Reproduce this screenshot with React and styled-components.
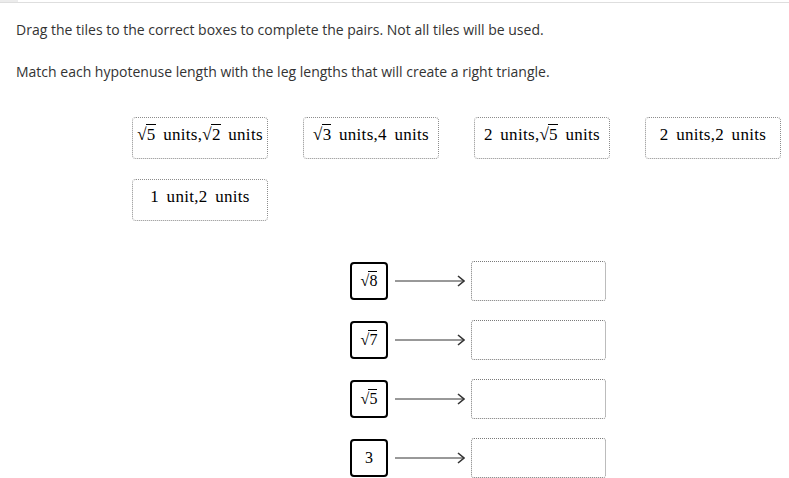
import React from 'react';
import styled, { createGlobalStyle } from 'styled-components';

const GlobalStyle = createGlobalStyle`
  html, body {
    margin: 0;
    padding: 0;
    background: #ffffff;
    overflow: hidden;
  }
`;

const Page = styled.div`
  font-family: "Open Sans", "Liberation Sans", sans-serif;
  color: #333333;
`;

const TopBar = styled.div`
  height: 2px;
  border-bottom: 1px solid #dedede;
  position: relative;

  &::before {
    content: '';
    position: absolute;
    left: 0;
    top: 0;
    width: 18px;
    height: 2px;
    background: #ececec;
  }
`;

const Content = styled.div`
  padding: 17px 16px 0 16px;
`;

const Instruction = styled.p`
  margin: 0 0 22px 0;
  font-size: 14px;
  line-height: 20px;
`;

const TileGrid = styled.div`
  display: grid;
  grid-template-columns: repeat(4, 136px);
  column-gap: 35px;
  row-gap: 20px;
  margin: 35px 0 0 116px;
`;

const Tile = styled.div`
  box-sizing: border-box;
  height: 42px;
  border: 1px dotted #8c8c8c;
  border-radius: 4px;
  display: flex;
  align-items: center;
  justify-content: center;
  padding-bottom: 6px;
  font-family: "Liberation Serif", "DejaVu Serif", serif;
  font-size: 17px;
  letter-spacing: 0.3px;
  word-spacing: 3px;
  color: #000000;
  white-space: pre;
`;

const Radicand = styled.span`
  border-top: 1px solid #000000;
  line-height: 16px;
  padding-left: 1px;
  margin-left: -1px;
`;

const Pairs = styled.div`
  display: flex;
  flex-direction: column;
  gap: 19px;
  margin: 40px 0 0 334px;
`;

const PairRow = styled.div`
  display: flex;
  align-items: center;
`;

const Term = styled.div`
  box-sizing: border-box;
  width: 38px;
  height: 38px;
  border: 2px solid #000000;
  border-radius: 4px;
  display: flex;
  align-items: center;
  justify-content: center;
  font-family: "Liberation Serif", "DejaVu Serif", serif;
  font-size: 16px;
  color: #000000;
`;

const ArrowWrap = styled.div`
  width: 70px;
  height: 14px;
  margin: 0 6px 0 7px;
  display: flex;
`;

const Target = styled.div`
  box-sizing: border-box;
  width: 135px;
  height: 40px;
  border: 1px dotted #7a7a7a;
  border-radius: 3px;
`;

const Sqrt = ({ n }) => (
  <span>
    √<Radicand>{n}</Radicand>
  </span>
);

const Arrow = () => (
  <ArrowWrap>
    <svg width="70" height="14" viewBox="0 0 70 14">
      <line x1="0" y1="7" x2="69" y2="7" stroke="#333" strokeWidth="1" />
      <polyline points="63,2 69,7 63,12" fill="none" stroke="#333" strokeWidth="1.6" />
    </svg>
  </ArrowWrap>
);

const tiles = [
  [<Sqrt n="5" key="a" />, ' units,', <Sqrt n="2" key="b" />, ' units'],
  [<Sqrt n="3" key="a" />, ' units,4 units'],
  ['2 units,', <Sqrt n="5" key="a" />, ' units'],
  ['2 units,2 units'],
  ['1 unit,2 units'],
];

const pairs = [
  <Sqrt n="8" />,
  <Sqrt n="7" />,
  <Sqrt n="5" />,
  '3',
];

export default function App() {
  return (
    <Page>
      <GlobalStyle />
      <TopBar />
      <Content>
        <Instruction>Drag the tiles to the correct boxes to complete the pairs. Not all tiles will be used.</Instruction>
        <Instruction>Match each hypotenuse length with the leg lengths that will create a right triangle.</Instruction>
        <TileGrid>
          {tiles.map((t, i) => (
            <Tile key={i}>{t}</Tile>
          ))}
        </TileGrid>
        <Pairs>
          {pairs.map((p, i) => (
            <PairRow key={i}>
              <Term>{p}</Term>
              <Arrow />
              <Target />
            </PairRow>
          ))}
        </Pairs>
      </Content>
    </Page>
  );
}
